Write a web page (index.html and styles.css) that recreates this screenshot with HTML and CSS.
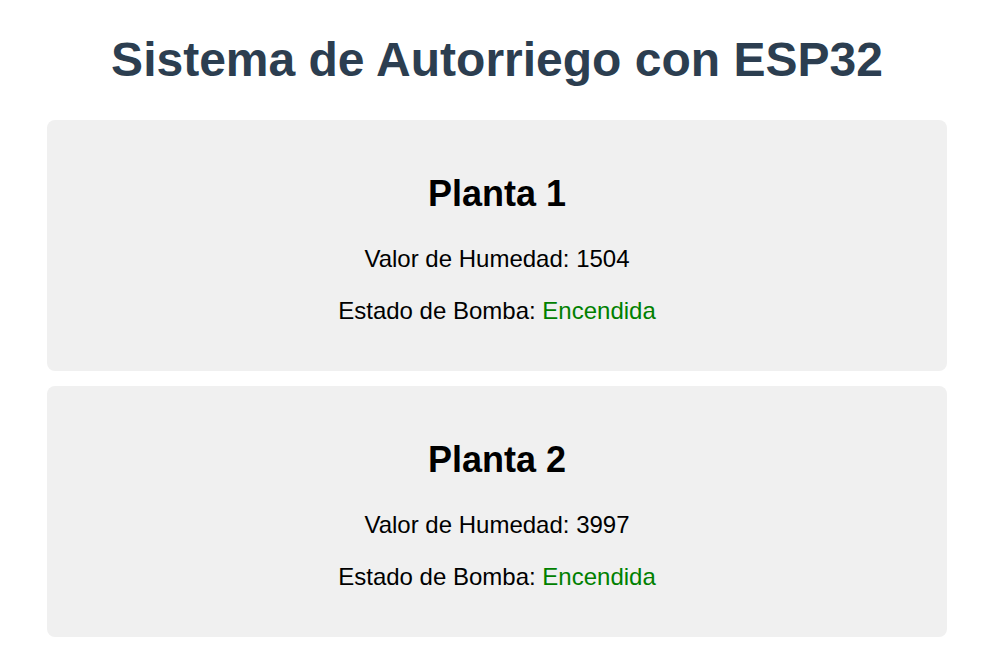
FILE: index.html
```html
<!DOCTYPE html>
<html lang="es">
<head>
<meta charset="utf-8">
<title>Sistema de Autorriego con ESP32</title>
<link rel="stylesheet" href="styles.css">
</head>
<body>
<main class="page">
  <h1 class="title">Sistema de Autorriego con ESP32</h1>
  <section class="card">
    <h2 class="card-title">Planta 1</h2>
    <p class="row">Valor de Humedad: 1504</p>
    <p class="row">Estado de Bomba: <span class="on">Encendida</span></p>
  </section>
  <section class="card">
    <h2 class="card-title">Planta 2</h2>
    <p class="row">Valor de Humedad: 3997</p>
    <p class="row">Estado de Bomba: <span class="on">Encendida</span></p>
  </section>
</main>
</body>
</html>
```
FILE: styles.css
```css
html, body {
  margin: 0;
  padding: 0;
  background: #ffffff;
}
body {
  font-family: "Liberation Sans", Arial, sans-serif;
  font-size: 24px;
  color: #000000;
}
.page {
  width: 900px;
  margin: 0 auto;
  padding: 32px 12px 0 0;
  display: flex;
  flex-direction: column;
  gap: 15px;
}
.title {
  margin: 0 0 18px;
  font-size: 48px;
  font-weight: bold;
  color: #2c3e50;
  text-align: center;
}
.card {
  background: #f0f0f0;
  border-radius: 8px;
  padding: 23px 0 22px;
  text-align: center;
}
.card-title {
  margin: 30px 0;
  font-size: 36px;
  font-weight: bold;
}
.row {
  margin: 24px 0;
}
.on {
  color: #008000;
}
```
